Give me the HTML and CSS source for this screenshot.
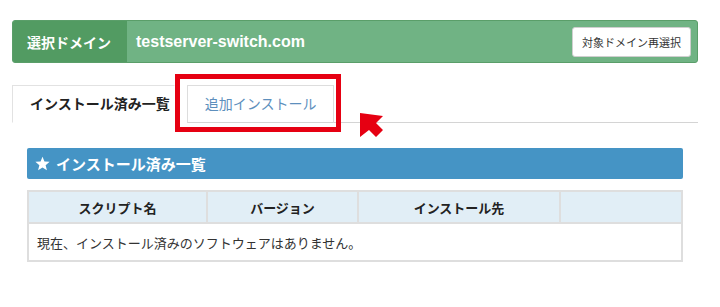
FILE: index.html
```html
<!DOCTYPE html>
<html lang="ja">
<head>
    <meta charset="UTF-8">
    <meta name="viewport" content="width=device-width, initial-scale=1.0">
    <title>インストール済み一覧</title>
    <link rel="stylesheet" href="styles.css">
</head>
<body>
    <div class="page">
        <div class="domain-bar">
            <div class="domain-label">選択ドメイン</div>
            <div class="domain-name">testserver-switch.com</div>
            <button class="reselect">対象ドメイン再選択</button>
        </div>

        <div class="tabs">
            <div class="tab active">インストール済み一覧</div>
            <div class="tab">追加インストール</div>
            <div class="tab-rest"></div>
            <div class="highlight"></div>
            <svg class="pointer" width="30" height="28" viewBox="0 0 30 28">
                <polygon points="3,1 26,4 19,11 26,18 19,25 12,18 3,25" fill="#e60012"/>
            </svg>
        </div>

        <div class="panel">
            <div class="panel-title">
                <svg class="star" width="15" height="15" viewBox="0 0 24 24">
                    <polygon points="12,1 15.1,8.6 23.4,9.2 17,14.6 19.1,22.6 12,18.2 4.9,22.6 7,14.6 0.6,9.2 8.9,8.6" fill="#fff"/>
                </svg>
                インストール済み一覧
            </div>
            <table class="list">
                <colgroup>
                    <col class="col-name">
                    <col class="col-ver">
                    <col class="col-dest">
                    <col>
                </colgroup>
                <tr>
                    <th>スクリプト名</th>
                    <th>バージョン</th>
                    <th>インストール先</th>
                    <th></th>
                </tr>
                <tr>
                    <td colspan="4">現在、インストール済みのソフトウェアはありません。</td>
                </tr>
            </table>
        </div>
    </div>
</body>
</html>
```

FILE: styles.css
```css
body {
    margin: 0;
    font-family: "Liberation Sans", "Noto Sans CJK JP", sans-serif;
    color: #333;
    background: #fff;
}
.page {
    padding: 20px 22px 0 12px;
}

/* selected domain */
.domain-bar {
    display: flex;
    align-items: center;
    height: 41px;
    border: 1px solid #5a9e69;
    border-radius: 3px;
    background-color: #70b384;
    overflow: hidden;
}
.domain-label {
    display: flex;
    align-items: center;
    width: 114px;
    height: 100%;
    padding-left: 14px;
    box-sizing: border-box;
    background-color: #529b62;
    color: #fff;
    font-size: 14px;
    font-weight: bold;
}
.domain-name {
    flex: 1;
    padding-left: 9px;
    color: #fff;
    font-size: 16px;
    font-weight: bold;
}
.reselect {
    height: 30px;
    margin-right: 6px;
    padding: 0 9px;
    border: 1px solid #cfcfcf;
    border-radius: 3px;
    background: #fff;
    color: #333;
    font-family: "Noto Sans CJK JP", sans-serif;
    font-size: 11px;
}

/* tabs */
.tabs {
    position: relative;
    display: flex;
    align-items: flex-end;
    margin-top: 22px;
}
.tab {
    height: 36px;
    line-height: 36px;
    padding: 0 17px;
    border: 1px solid #ddd;
    border-bottom-color: #d4d4d4;
    color: #5d8fbd;
    font-size: 14px;
    white-space: nowrap;
}
.tab.active {
    padding: 0 4px 0 17px;
    margin-right: 12px;
    border-color: #e2e2e2;
    border-right-color: #fff;
    border-bottom-color: #fff;
    color: #222;
    font-weight: bold;
}
.tab-rest {
    flex: 1;
    border-bottom: 1px solid #d4d4d4;
}
.highlight {
    position: absolute;
    left: 163px;
    top: -11px;
    width: 156px;
    height: 48px;
    border: 5px solid #e60012;
}
.pointer {
    position: absolute;
    left: 345px;
    top: 27px;
}

/* installed list */
.panel {
    padding: 25px 15px 0 15px;
}
.panel-title {
    display: flex;
    align-items: center;
    gap: 6px;
    height: 31px;
    padding-left: 8px;
    border-radius: 2px;
    background-color: #4594c5;
    color: #fff;
    font-size: 15px;
    font-weight: bold;
}
.list {
    width: 100%;
    margin-top: 11px;
    border-collapse: collapse;
    table-layout: fixed;
    font-size: 13px;
}
.list th {
    height: 30px;
    padding: 0;
    border: 2px solid #dedede;
    background-color: #e1eef6;
    color: #222;
    font-weight: bold;
}
.list td {
    height: 36px;
    padding: 0 0 0 8px;
    border: 2px solid #dedede;
    border-top: 0;
    color: #333;
}
.col-name { width: 179px; }
.col-ver { width: 151px; }
.col-dest { width: 202px; }
```
